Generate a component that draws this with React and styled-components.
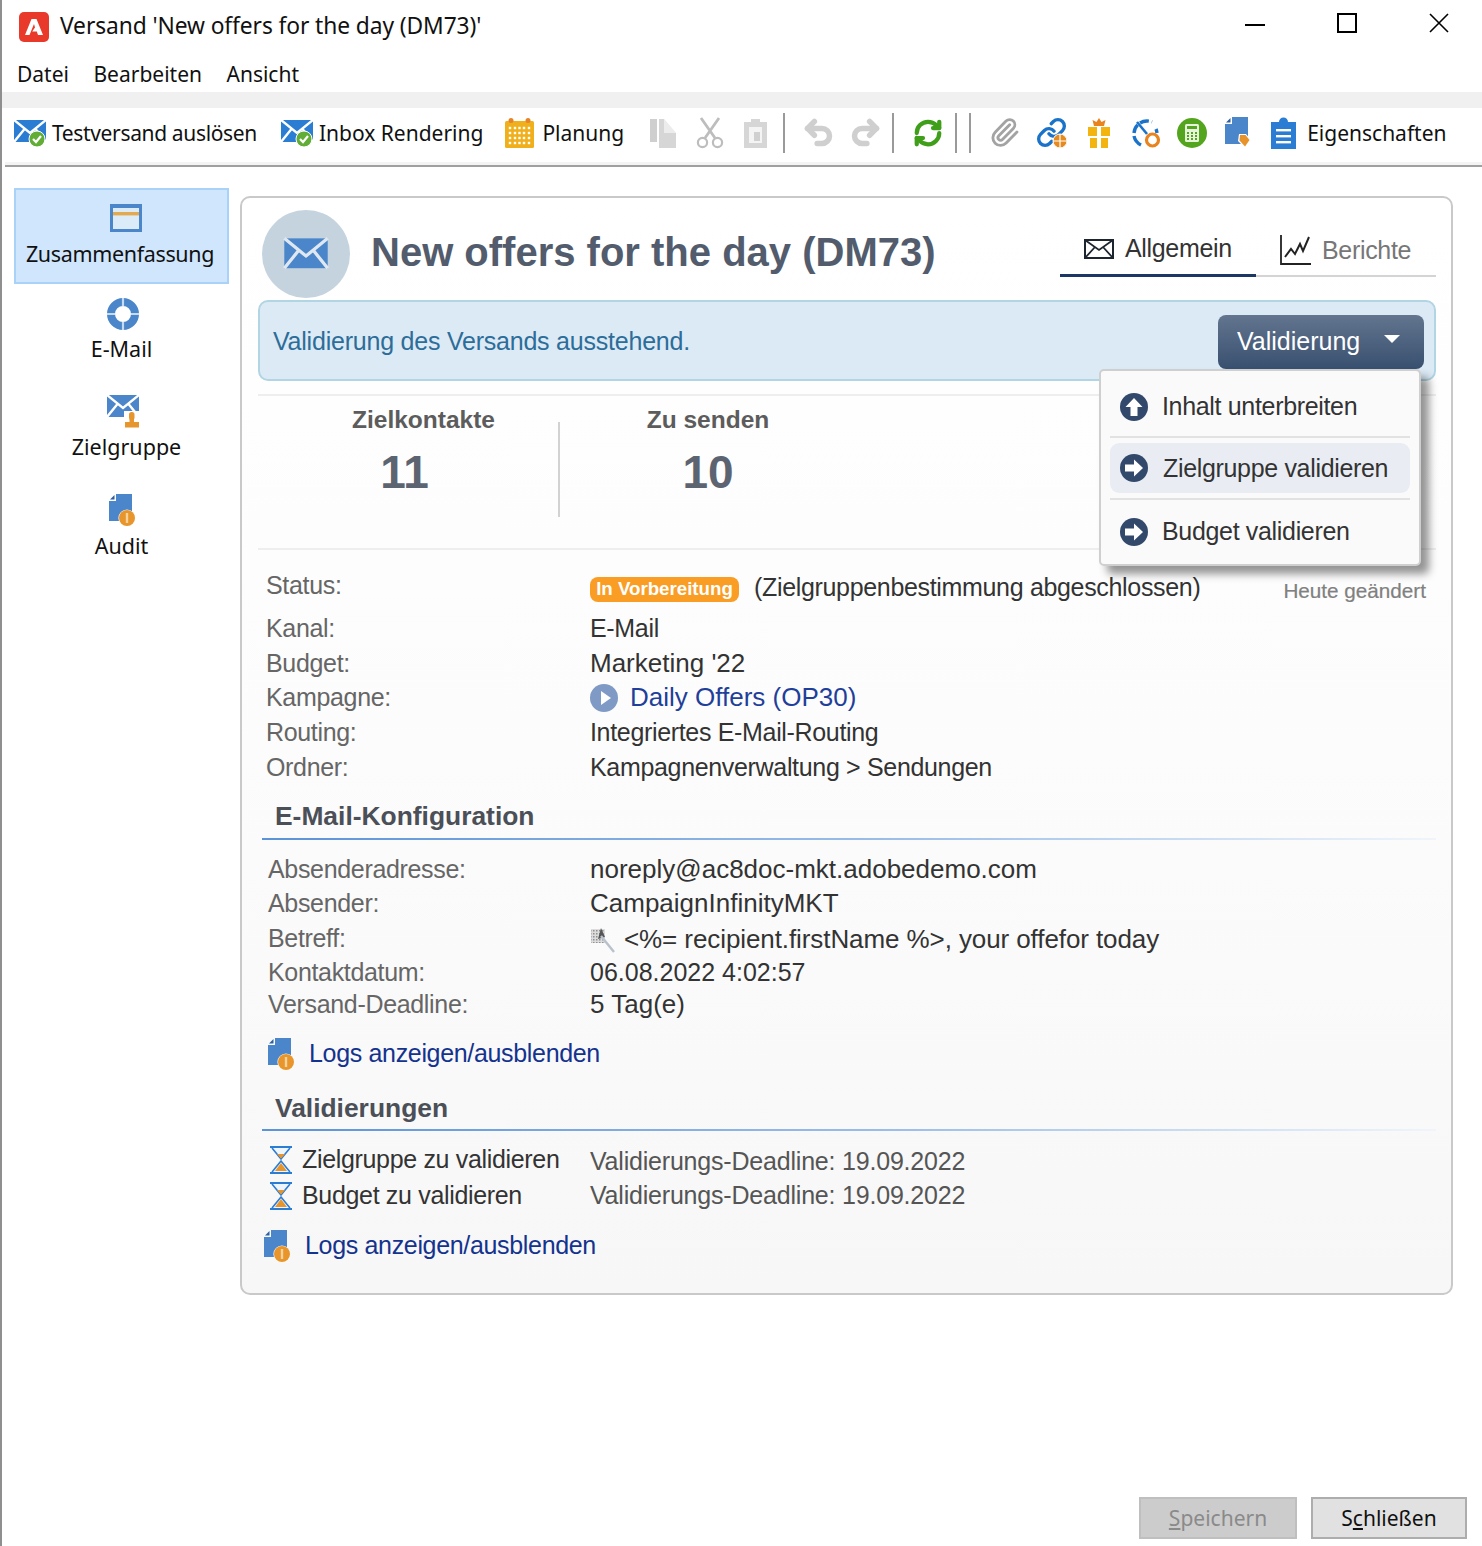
import React from "react";
import styled, { createGlobalStyle } from "styled-components";
import { Undo2, Redo2, RefreshCw, Paperclip, Link as LinkIcon } from "lucide-react";

const Global = createGlobalStyle`
  html, body { margin: 0; padding: 0; background: #fff; overflow: hidden; }
  * { box-sizing: border-box; }
`;

const ui = `"Noto Sans", "Open Sans", sans-serif`;
const body = `"Liberation Sans", Arial, sans-serif`;

const Window = styled.div`
  width: 1482px; height: 1546px; display: flex; flex-direction: column;
  border-left: 2px solid #8f8f8f; background: #fff; font-family: ${ui}; color: #111; position: relative;
`;
const TitleBar = styled.header`
  height: 54px; display: flex; align-items: center; padding-left: 17px; flex: none;
`;
const TitleText = styled.span`font-size: 22.8px; margin: 0 0 3px 11px; letter-spacing: -0.1px;`;
const WinControls = styled.div`
  margin: 0 0 9px auto; display: flex; align-items: center; gap: 72px; padding-right: 33px; height: 48px;
`;
const MenuBar = styled.nav`
  height: 38px; display: flex; align-items: center; gap: 24.5px; padding: 2px 0 0 15px; font-size: 21px; flex: none;
`;
const Strip = styled.div`height: 16px; background: #f0f0f0; flex: none;`;
const Toolbar = styled.div`
  height: 54px; margin-left: 3px; padding: 0 0 5px 9px; display: flex; align-items: center; flex: none; font-size: 21px;
`;
const ToolItem = styled.div`
  display: flex; align-items: center; gap: ${p => p.$gap ?? 7}px; margin-left: ${p => p.$ml ?? 0}px; flex: none;
`;
const ToolText = styled.span`letter-spacing: ${p => p.$ls ?? 0}px;`;
const ToolSep = styled.div`
  width: 2px; height: 40px; background: #9a9a9a; margin-left: ${p => p.$ml}px; flex: none;
`;
const ToolRule = styled.div`
  height: 5px; flex: none; margin-left: 3px; background: #f4f4f4; border-bottom: 2px solid #a0a0a0;
`;
const Main = styled.div`display: flex; flex: 1; min-height: 0;`;
const Sidebar = styled.aside`
  width: 215px; margin: 21px 0 0 12px; display: flex; flex-direction: column; flex: none;
`;
const NavItem = styled.div`
  height: ${p => p.$h}px; display: flex; flex-direction: column; align-items: center; font-size: 21.5px;
  padding-top: ${p => p.$pt}px;
  ${p => p.$active && `background: #cfe6fd; border: 2px solid #a8d2f8;`}
`;
const NavIcon = styled.div`display: flex; margin-left: ${p => p.$shift ?? 0}px;`;
const NavLabel = styled.span`
  line-height: 34px; margin-top: ${p => p.$mt ?? 3}px; margin-left: ${p => p.$shift ?? 0}px; letter-spacing: ${p => p.$ls ?? 0}px;
`;
const Panel = styled.section`
  width: 1213px; height: 1099px; margin: 29px 0 0 11px; border: 2px solid #c9c9c9; border-radius: 10px;
  background: linear-gradient(#fff, #fcfcfc 50%, #f7f7f7); padding: 12px 15px 0 16px; position: relative; flex: none;
  font-family: ${body}; font-size: 25px; letter-spacing: -0.33px; color: #333;
`;
const Header = styled.div`display: flex; height: 90px; align-items: flex-start;`;
const Avatar = styled.div`
  width: 88px; height: 88px; border-radius: 50%; background: #c5d3df; margin-left: 4px; flex: none;
  display: flex; align-items: center; justify-content: center; padding-top: 4px;
`;
const Title = styled.h1`
  margin: 0 0 0 21px; font-size: 40px; line-height: 84px; font-weight: 700; color: #525c6c; white-space: nowrap; letter-spacing: 0;
`;
const Tabs = styled.div`
  margin-left: auto; width: 376px; height: 56px; margin-top: 11px; display: flex; flex: none; border-bottom: 2px solid #d4d4d4;
`;
const Tab = styled.div`
  display: flex; align-items: center; gap: 11px; height: 56px; padding: 2px 0 0 ${p => p.$pl}px; width: ${p => p.$w}px;
  color: ${p => p.$active ? "#333" : "#777"};
  ${p => p.$active && `border-bottom: 3px solid #1c3763;`}
`;
const Banner = styled.div`
  height: 81px; background: #dceaf5; border: 2px solid #b2d5e3; border-radius: 10px; display: flex; align-items: center;
  padding: 0 10px 0 13px; color: #2c6d99; justify-content: space-between; letter-spacing: -0.22px;
`;
const BannerText = styled.span`margin-top: 2px;`;
const ValidateButton = styled.div`
  width: 206px; height: 54px; border-radius: 8px; background: linear-gradient(#63758f, #38506f); color: #fff; font-size: 25px; letter-spacing: 0;
  display: flex; align-items: center; justify-content: space-between; padding: 0 24px 0 19px; margin-top: 2px;
`;
const Caret = styled.div`
  width: 0; height: 0; border-left: 8px solid transparent; border-right: 8px solid transparent; border-top: 8px solid #fff; margin-bottom: 6px;
`;
const Menu = styled.div`
  position: absolute; left: 857px; top: 171px; width: 322px; height: 197px; background: #fafafa; border: 2px solid #cfcfcf;
  border-radius: 5px; box-shadow: 8px 8px 8px rgba(0,0,0,.42); padding: 11px 9px 0; display: flex; flex-direction: column; z-index: 3;
`;
const MenuEntry = styled.div`
  height: ${p => p.$h ?? 49}px; display: flex; align-items: center; gap: ${p => p.$gap ?? 14}px; padding-left: 10px; border-radius: 9px; flex: none; white-space: nowrap;
  ${p => p.$hot && `background: #e9edf3;`}
`;
const MenuSep = styled.div`height: 2px; background: #e2e2e2; margin: 5px 0 ${p => p.$mb ?? 5}px; flex: none;`;
const Stats = styled.div`
  height: 156px; margin-top: 13px; display: flex; border-top: 2px solid #eee; border-bottom: 2px solid #eee; flex: none; letter-spacing: 0;
`;
const StatCol = styled.div`
  width: ${p => p.$w}px; margin-left: ${p => p.$ml ?? 0}px; padding-top: 8px; display: flex; flex-direction: column; align-items: center; flex: none;
`;
const StatLabel = styled.div`font-size: 24.5px; font-weight: 700; color: #5c5c5c; line-height: 32px;`;
const StatValue = styled.div`
  font-size: 46px; font-weight: 700; color: #5c6472; line-height: 58px; margin-top: 7px; padding-right: ${p => p.$pr ?? 0}px;
`;
const StatDivider = styled.div`width: 2px; height: 95px; margin-top: 26px; background: #d2d2d2; flex: none;`;
const Details = styled.div`padding-top: 17px;`;
const Row = styled.div`
  display: grid; grid-template-columns: ${p => p.$col ?? 324}px 1fr; align-items: center; height: ${p => p.$h ?? 34.75}px;
  padding-left: ${p => p.$pl ?? 8}px; margin-bottom: ${p => p.$mb ?? 0}px; white-space: nowrap;
`;
const Label = styled.div`color: ${p => p.$dark ? "#333" : "#666"}; display: flex; align-items: center; gap: 10px;`;
const Value = styled.div`
  display: flex; align-items: center; color: ${p => p.$muted ? "#555" : "#333"}; gap: ${p => p.$gap ?? 8}px;
  font-size: ${p => p.$wide ? "26px" : "inherit"}; letter-spacing: ${p => p.$wide ? "0" : (p.$ls ?? "inherit")};
  padding-top: ${p => p.$pt ?? 0}px;
`;
const StatusText = styled.span`margin-top: 4px;`;
const SubjectText = styled.span`letter-spacing: -0.09px;`;
const Badge = styled.span`
  background: #f99d25; color: #fff; font-size: 18.7px; font-weight: 700; border-radius: 8px; height: 25px; width: 149px; letter-spacing: 0;
  display: inline-flex; align-items: center; justify-content: center; margin: 8px 8px 0 0; flex: none;
`;
const ModifiedNote = styled.span`
  margin-left: auto; font-size: 20.7px; color: #808080; margin-top: 12px; margin-right: 10px; letter-spacing: 0; -webkit-text-stroke: .2px #808080;
`;
const Anchor = styled.span`color: #1f3f9a;`;
const SectionHead = styled.div`
  margin: ${p => p.$mt}px 0 ${p => p.$mb}px 4px; padding: 0 0 ${p => p.$pb}px 13px; font-size: 26.4px; line-height: 30px; font-weight: 700; color: #4b4f57; letter-spacing: 0;
  background: linear-gradient(90deg, #5b93d8, #9dbfe8 55%, #f0f5fb) left bottom / 100% 2px no-repeat;
`;
const LogsRow = styled.div`
  height: 40px; display: flex; align-items: center; gap: 15px; margin: ${p => p.$mt}px 0 0 ${p => p.$ml}px; color: #14338e;
`;
const Footer = styled.footer`
  display: flex; justify-content: flex-end; gap: 14px; padding: 0 15px 7px 0; margin-top: auto; flex: none;
`;
const Button = styled.div`
  height: 42px; width: ${p => p.$w}px; display: flex; align-items: center; justify-content: center; font-size: 21px;
  background: ${p => p.$off ? "#cccccc" : "#e1e1e1"}; border: 2px solid ${p => p.$off ? "#bfbfbf" : "#adadad"}; color: ${p => p.$off ? "#8a8a8a" : "#111"};
`;
const Column = styled.div`display: flex; flex-direction: column; flex: 1; min-height: 0;`;

const Mail = ({ w = 32, h = 28, c = "#2b7cd3", line = "#fff", check }) => (
  <svg width={w} height={h} viewBox="0 0 32 28">
    <rect x="0" y="1" width="32" height="22" fill={c} />
    <path d="M0 1 L16 14 L32 1" fill="none" stroke={line} strokeWidth="2.4" />
    <path d="M0 23 L10.5 10 M32 23 L21.5 10" stroke={line} strokeWidth="2.4" />
    {check && <>
      <circle cx="23" cy="20" r="8" fill="#62ad35" stroke="#fff" strokeWidth="1" />
      <path d="M19 20 l3 3 l5 -6" fill="none" stroke="#fff" strokeWidth="2.2" />
    </>}
  </svg>
);
const MailPerson = () => (
  <svg width="32" height="33" viewBox="0 0 32 33">
    <rect x="0" y="0" width="32" height="22" fill="#4a86c9" />
    <path d="M0 0 L16 13 L32 0" fill="none" stroke="#fff" strokeWidth="2.4" />
    <path d="M0 22 L10.5 9 M32 22 L21.5 9" stroke="#fff" strokeWidth="2.4" />
    <path d="M17 16 h15 v17 h-15z" fill="#fff" />
    <rect x="22" y="17" width="5.5" height="8" rx="2.5" fill="#e5962f" />
    <path d="M22.5 24 h4.5 v3 h5 v5.5 h-14 v-5.5 h4.5z" fill="#e5962f" />
  </svg>
);
const Calendar = () => (
  <svg width="31" height="32" viewBox="0 0 31 32">
    <rect x="1" y="4" width="29" height="27" rx="1.5" fill="#f0b01c" />
    <circle cx="7" cy="3.5" r="2.5" fill="#e5832a" /><circle cx="24" cy="3.5" r="2.5" fill="#e5832a" />
    {[11, 16, 21, 26].map(y => [6, 11, 15.5, 20, 25].map(x => <rect key={`${x}-${y}`} x={x - 1.2} y={y - 1.2} width="2.4" height="2.4" fill="#fff" />))}
  </svg>
);
const CopyGray = () => (
  <svg width="28" height="32" viewBox="0 0 28 32">
    <rect x="1" y="2" width="7" height="23" fill="#cfcfcf" />
    <path d="M10 2 h5 l12 14 v15 h-17z" fill="#d6d6d6" />
    <path d="M15 2 v14 h12z" fill="#fff" opacity=".55" />
  </svg>
);
const ScissorsGray = () => (
  <svg width="28" height="32" viewBox="0 0 28 32">
    <circle cx="6.5" cy="25.5" r="4.6" fill="none" stroke="#bdbdbd" strokeWidth="2.2" />
    <circle cx="21.5" cy="25.5" r="4.6" fill="none" stroke="#bdbdbd" strokeWidth="2.2" />
    <path d="M9 21 L23 1 M19 21 L5 1" stroke="#bdbdbd" strokeWidth="2.8" />
  </svg>
);
const PasteGray = () => (
  <svg width="26" height="32" viewBox="0 0 26 32">
    <path d="M1 5 h7 v-3 h9 v3 h7 v26 h-23z" fill="#d6d6d6" />
    <rect x="6" y="10" width="13" height="16" fill="#f4f4f4" />
    <rect x="11" y="15" width="6" height="9" fill="#d0d0d0" />
  </svg>
);
const LinkGlobe = () => (
  <span style={{ display: "inline-flex", width: 32, height: 32, position: "relative" }}>
    <LinkIcon size={31} color="#1a73c9" strokeWidth={2.6} />
    <svg width="16" height="16" viewBox="0 0 16 16" style={{ position: "absolute", right: 0, bottom: 0 }}>
      <circle cx="8" cy="8" r="7" fill="#e58a1f" stroke="#fff" />
      <path d="M8 1 v14 M1 8 h14" stroke="#fff" strokeWidth="1.2" />
    </svg>
  </span>
);
const Gift = () => (
  <svg width="24" height="32" viewBox="0 0 24 32">
    <path d="M12 1 l2.5 4 l4-2 l-1.5 6 h-10 l-1.5-6 l4 2z" fill="#e8831f" />
    <path d="M1 10 h9 v9 h-9z M14 10 h9 v9 h-9z M3 21 h7 v10 h-7z M14 21 h7 v10 h-7z" fill="#f3b40f" />
  </svg>
);
const Split = () => (
  <svg width="31" height="32" viewBox="0 0 31 32">
    <path d="M4 16 A13 13 0 0 1 22 5" fill="none" stroke="#1a73c9" strokeWidth="3.4" strokeDasharray="9 3" />
    <path d="M26 12 A13 13 0 0 1 27 16" fill="none" stroke="#1a73c9" strokeWidth="3.4" />
    <path d="M7 5 L17 17" stroke="#1a73c9" strokeWidth="2.6" />
    <path d="M4 19 A13 13 0 0 0 11 28" fill="none" stroke="#1a73c9" strokeWidth="3.4" />
    <circle cx="22.5" cy="23" r="6" fill="#fff" stroke="#e8831f" strokeWidth="3.2" />
  </svg>
);
const Calc = () => (
  <svg width="30" height="30" viewBox="0 0 30 30">
    <circle cx="15" cy="15" r="15" fill="#53a51e" />
    <rect x="8" y="6" width="14" height="18" rx="1.5" fill="#e8f3dc" />
    <rect x="10" y="8" width="10" height="3" fill="#53a51e" />
    {[14, 17, 20].map(y => [11, 15, 19].map(x => <rect key={`${x}-${y}`} x={x - 1} y={y} width="2" height="2" fill="#53a51e" />))}
  </svg>
);
const DocInfo = ({ w = 26, h = 32, mark = "i" }) => (
  <svg width={w} height={h} viewBox="0 0 26 32">
    <path d="M7 0 H23 V27 H0 V7 H7Z" fill="#4a86c9" />
    <path d="M1 5.5 L5.5 1 V5.5Z" fill="#2f5f9e" />
    {mark === "i" ? <>
      <circle cx="18" cy="24" r="8.6" fill="#fff" />
      <circle cx="18" cy="24" r="8" fill="#e8952c" />
      <rect x="16.8" y="19" width="2.4" height="10" fill="#f6d29c" />
    </> : <>
      <path d="M14 17 h7 l5 6 l-6 8 l-7 -7z" fill="#fff" />
      <path d="M15 18 h5.5 l4 5 l-4.5 6.5 l-5.5 -6z" fill="#e8922a" />
    </>}
  </svg>
);
const Clipboard = () => (
  <svg width="25" height="32" viewBox="0 0 25 32">
    <path d="M0 5 h8 a4.5 4.5 0 0 1 9 0 h8 v27 h-25z" fill="#2b7cd3" />
    <rect x="5" y="12" width="15" height="2.4" fill="#fff" />
    <rect x="5" y="18" width="15" height="2.4" fill="#fff" />
    <rect x="5" y="24" width="15" height="2.4" fill="#fff" />
  </svg>
);
const Summary = () => (
  <svg width="32" height="28" viewBox="0 0 32 28">
    <rect x="0" y="0" width="32" height="28" fill="#4a86c9" />
    <rect x="3" y="4" width="26" height="21" fill="#dcebf8" />
    <rect x="3" y="8" width="26" height="3.4" fill="#e3a94e" />
  </svg>
);
const Ring = () => (
  <svg width="32" height="32" viewBox="0 0 32 32">
    <circle cx="16" cy="16" r="12" fill="none" stroke="#4a86c9" strokeWidth="8" />
    <path d="M16 0 v8 M16 24 v8 M0 16 h8 M24 16 h8" stroke="#c5dbf1" strokeWidth="2.2" />
  </svg>
);
const Arrow = ({ up }) => (
  <svg width="28" height="28" viewBox="0 0 28 28" style={{ flex: "none" }}>
    <circle cx="14" cy="14" r="14" fill="#33496b" />
    <g transform={up ? "rotate(-90 14 14)" : undefined}>
      <path d="M5 10.5 h9 v-5 l9 8.5 l-9 8.5 v-5 h-9z" fill="#fff" />
    </g>
  </svg>
);
const Play = () => (
  <svg width="28" height="28" viewBox="0 0 28 28" style={{ flex: "none" }}>
    <circle cx="14" cy="14" r="14" fill="#7f9ac4" />
    <path d="M11 7 L21 14 L11 21Z" fill="#fff" />
  </svg>
);
const Hourglass = () => (
  <svg width="22" height="28" viewBox="0 0 22 28" style={{ flex: "none" }}>
    <path d="M0 1 h22 M0 27 h22" stroke="#2b7cd3" strokeWidth="2" />
    <path d="M2 2 L11 13 L20 2 M2 26 L11 15 L20 26" fill="#eef5fc" stroke="#2b7cd3" strokeWidth="1.6" />
    <path d="M7 8 h8 l-4 4.5z M11 17 l6 8 h-12z" fill="#e8962c" />
  </svg>
);
const Wand = () => (
  <svg width="26" height="26" viewBox="0 0 26 26" style={{ flex: "none" }}>
    <defs>
      <pattern id="sp" width="3" height="3" patternUnits="userSpaceOnUse">
        <rect width="3" height="3" fill="#dcdcdc" /><rect width="1.5" height="1.5" fill="#8f8f8f" />
      </pattern>
    </defs>
    <rect x="1" y="2" width="14" height="14" fill="url(#sp)" />
    <path d="M11 1 L8 12 L15 10Z" fill="#555" />
    <path d="M11 9 L24 25" stroke="#b9c2cc" strokeWidth="2.4" />
  </svg>
);
const EnvelopeLine = () => (
  <svg width="30" height="20" viewBox="0 0 30 20">
    <rect x="1" y="1" width="28" height="18" fill="none" stroke="#1d2630" strokeWidth="2" />
    <path d="M1 1 L15 11 L29 1 M1 19 L11 8 M29 19 L19 8" fill="none" stroke="#1d2630" strokeWidth="1.8" />
  </svg>
);
const ChartLine = () => (
  <svg width="31" height="32" viewBox="0 0 31 32">
    <path d="M1 1 V30 H31" fill="none" stroke="#222" strokeWidth="1.8" />
    <path d="M5 23 L11 15 L15 20 L20 10 L23 17 L29 3" fill="none" stroke="#222" strokeWidth="2" />
  </svg>
);
const AdobeLogo = () => (
  <svg width="30" height="30" viewBox="0 0 30 30">
    <rect width="30" height="30" rx="5" fill="#e8392b" />
    <path d="M12.5 7 h5 L24 23 h-5 l-1.2-3.4 h-4.6 L16 15.5 L15 12 L10.5 23 H6z" fill="#fff" />
  </svg>
);

const WinMin = () => <svg width="20" height="2" viewBox="0 0 20 2" style={{ marginBottom: -4 }}><rect width="20" height="2" fill="#000" /></svg>;
const WinMax = () => <svg width="20" height="20" viewBox="0 0 20 20"><rect x="1" y="1" width="18" height="18" fill="none" stroke="#000" strokeWidth="2" /></svg>;
const WinClose = () => <svg width="20" height="20" viewBox="0 0 20 20"><path d="M1 1 L19 19 M19 1 L1 19" stroke="#000" strokeWidth="1.6" /></svg>;

export default function App() {
  return (
    <Window>
      <Global />
      <TitleBar>
        <AdobeLogo />
        <TitleText>Versand 'New offers for the day (DM73)'</TitleText>
        <WinControls><WinMin /><WinMax /><WinClose /></WinControls>
      </TitleBar>
      <MenuBar><span>Datei</span><span>Bearbeiten</span><span>Ansicht</span></MenuBar>
      <Strip />
      <Toolbar>
        <ToolItem $gap={6}><Mail check /><ToolText $ls={-0.35}>Testversand auslösen</ToolText></ToolItem>
        <ToolItem $ml={24} $gap={6}><Mail check /><ToolText>Inbox Rendering</ToolText></ToolItem>
        <ToolItem $ml={21}><Calendar /><ToolText>Planung</ToolText></ToolItem>
        <ToolItem $ml={25}><CopyGray /></ToolItem>
        <ToolItem $ml={19}><ScissorsGray /></ToolItem>
        <ToolItem $ml={19}><PasteGray /></ToolItem>
        <ToolSep $ml={14} />
        <ToolItem $ml={17}><Undo2 size={33} color="#cfcfcf" strokeWidth={4} /></ToolItem>
        <ToolItem $ml={14}><Redo2 size={33} color="#cfcfcf" strokeWidth={4} /></ToolItem>
        <ToolSep $ml={10} />
        <ToolItem $ml={19}><RefreshCw size={30} color="#3f9f1a" strokeWidth={3.4} /></ToolItem>
        <ToolSep $ml={12} />
        <ToolSep $ml={12} />
        <ToolItem $ml={18}><Paperclip size={31} color="#a3a3a3" strokeWidth={2.2} /></ToolItem>
        <ToolItem $ml={16}><LinkGlobe /></ToolItem>
        <ToolItem $ml={19}><Gift /></ToolItem>
        <ToolItem $ml={19}><Split /></ToolItem>
        <ToolItem $ml={16}><Calc /></ToolItem>
        <ToolItem $ml={18}><DocInfo mark="tag" /></ToolItem>
        <ToolItem $ml={20} $gap={11}><Clipboard /><ToolText>Eigenschaften</ToolText></ToolItem>
      </Toolbar>
      <ToolRule />
      <Main>
        <Column>
          <Main>
            <Sidebar>
              <NavItem $active $h={96} $pt={14}>
                <NavIcon $shift={8}><Summary /></NavIcon>
                <NavLabel $mt={5} $shift={-3} $ls={-0.35}>Zusammenfassung</NavLabel>
              </NavItem>
              <NavItem $h={98} $pt={14}>
                <NavIcon $shift={2}><Ring /></NavIcon>
                <NavLabel $mt={2}>E-Mail</NavLabel>
              </NavItem>
              <NavItem $h={99} $pt={13}>
                <NavIcon $shift={2}><MailPerson /></NavIcon>
                <NavLabel $mt={2} $shift={10}>Zielgruppe</NavLabel>
              </NavItem>
              <NavItem $h={90} $pt={13}>
                <NavIcon><DocInfo /></NavIcon>
                <NavLabel $mt={3}>Audit</NavLabel>
              </NavItem>
            </Sidebar>
            <Panel>
              <Header>
                <Avatar><Mail w={46} h={38} c="#4a86c9" line="#dfe8f1" /></Avatar>
                <Title>New offers for the day (DM73)</Title>
                <Tabs>
                  <Tab $active $w={196} $pl={24}><EnvelopeLine /><span>Allgemein</span></Tab>
                  <Tab $w={180} $pl={24}><ChartLine /><span>Berichte</span></Tab>
                </Tabs>
              </Header>
              <Banner>
                <BannerText>Validierung des Versands ausstehend.</BannerText>
                <ValidateButton><span>Validierung</span><Caret /></ValidateButton>
              </Banner>
              <Menu>
                <MenuEntry><Arrow up /><span>Inhalt unterbreiten</span></MenuEntry>
                <MenuSep />
                <MenuEntry $hot $h={50} $gap={15}><Arrow /><span>Zielgruppe validieren</span></MenuEntry>
                <MenuSep $mb={7} />
                <MenuEntry><Arrow /><span>Budget validieren</span></MenuEntry>
              </Menu>
              <Stats>
                <StatCol $ml={31} $w={269}><StatLabel>Zielkontakte</StatLabel><StatValue $pr={38}>11</StatValue></StatCol>
                <StatDivider />
                <StatCol $w={296}><StatLabel>Zu senden</StatLabel><StatValue>10</StatValue></StatCol>
              </Stats>
              <Details>
                <Row $h={36} $mb={8}>
                  <Label>Status:</Label>
                  <Value $gap={7}>
                    <Badge>In Vorbereitung</Badge>
                    <StatusText>(Zielgruppenbestimmung abgeschlossen)</StatusText>
                    <ModifiedNote>Heute geändert</ModifiedNote>
                  </Value>
                </Row>
                <Row><Label>Kanal:</Label><Value>E-Mail</Value></Row>
                <Row><Label>Budget:</Label><Value $wide>Marketing '22</Value></Row>
                <Row><Label>Kampagne:</Label><Value $wide $gap={12}><Play /><Anchor>Daily Offers (OP30)</Anchor></Value></Row>
                <Row><Label>Routing:</Label><Value>Integriertes E-Mail-Routing</Value></Row>
                <Row><Label>Ordner:</Label><Value>Kampagnenverwaltung &gt; Sendungen</Value></Row>
              </Details>
              <SectionHead $mt={16} $mb={13} $pb={9}>E-Mail-Konfiguration</SectionHead>
              <Row $h={34} $pl={10} $col={322}><Label>Absenderadresse:</Label><Value $wide>noreply@ac8doc-mkt.adobedemo.com</Value></Row>
              <Row $h={34} $pl={10} $col={322}><Label>Absender:</Label><Value $wide>CampaignInfinityMKT</Value></Row>
              <Row $h={35} $pl={10} $col={322}><Label>Betreff:</Label><Value $wide $gap={8} $pt={3}><Wand /><SubjectText>&lt;%= recipient.firstName %&gt;, your offefor today</SubjectText></Value></Row>
              <Row $h={33} $pl={10} $col={322}><Label>Kontaktdatum:</Label><Value $ls="0">06.08.2022 4:02:57</Value></Row>
              <Row $h={27} $pl={10} $col={322}><Label>Versand-Deadline:</Label><Value $wide>5 Tag(e)</Value></Row>
              <LogsRow $mt={18} $ml={10}><DocInfo /><span>Logs anzeigen/ausblenden</span></LogsRow>
              <SectionHead $mt={19} $mb={11} $pb={8}>Validierungen</SectionHead>
              <Row $h={36} $pl={12} $col={320}><Label $dark><Hourglass /><span>Zielgruppe zu validieren</span></Label><Value $muted $ls="-0.2px" $pt={4}>Validierungs-Deadline: 19.09.2022</Value></Row>
              <Row $h={36} $pl={12} $col={320}><Label $dark><Hourglass /><span>Budget zu validieren</span></Label><Value $muted $ls="-0.2px">Validierungs-Deadline: 19.09.2022</Value></Row>
              <LogsRow $mt={12} $ml={6}><DocInfo /><span>Logs anzeigen/ausblenden</span></LogsRow>
            </Panel>
          </Main>
          <Footer>
            <Button $off $w={158}><span><u>S</u>peichern</span></Button>
            <Button $w={156}><span>S<u>c</u>hließen</span></Button>
          </Footer>
        </Column>
      </Main>
    </Window>
  );
}
